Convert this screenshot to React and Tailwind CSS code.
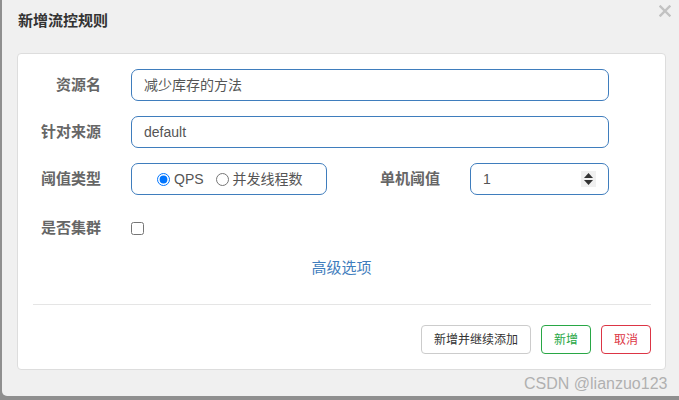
import React from "react";

const font = { fontFamily: '"Liberation Sans", "Noto Sans CJK SC", sans-serif' };

function Label({ children, w = "w-[83px]" }) {
  return (
    <div className={`${w} shrink-0 text-right text-[15px] font-bold text-[#666666] leading-[20px]`}>
      {children}
    </div>
  );
}

export default function App() {
  return (
    <div
      className="w-[679px] h-[400px] bg-[#8f8f8f] overflow-hidden flex pl-[2px] pb-[4px]"
      style={font}
    >
      <div className="relative flex-1 bg-[#f0f0f0] rounded-bl-[5px] flex flex-col">
        {/* close */}
        <div className="absolute left-[657px] top-[5px] w-[12px] h-[12px]">
          <svg width="12" height="12" viewBox="0 0 12 12">
            <path d="M1.5 1.5 L10.5 10.5 M10.5 1.5 L1.5 10.5" stroke="#c2c2c2" strokeWidth="2.4" strokeLinecap="square" />
          </svg>
        </div>
        {/* title */}
        <div className="h-[53px] pl-[16px] pt-[11px] text-[15px] font-bold text-[#333] leading-[20px]">
          新增流控规则
        </div>
        {/* card */}
        <div className="ml-[15px] w-[649px] h-[317px] bg-white border border-[#dddddd] rounded-[4px] flex flex-col pt-[15px]">
          {/* row1 */}
          <div className="flex items-center h-[32px]">
            <Label>资源名</Label>
            <div className="ml-[30px] w-[478px] h-[32px] border border-[#3f7dbd] rounded-[7px] flex items-center pl-[12px] text-[14px] text-[#555]">
              减少库存的方法
            </div>
          </div>
          {/* row2 */}
          <div className="flex items-center h-[32px] mt-[15px]">
            <Label>针对来源</Label>
            <div className="ml-[30px] w-[478px] h-[32px] border border-[#3f7dbd] rounded-[7px] flex items-center pl-[12px] text-[14px] text-[#555]">
              default
            </div>
          </div>
          {/* row3 */}
          <div className="flex items-center h-[32px] mt-[15px]">
            <Label>阈值类型</Label>
            <div className="ml-[30px] w-[196px] h-[32px] border border-[#3f7dbd] rounded-[7px] flex items-center pl-[25px] text-[14px] text-[#555]">
              <input type="radio" name="t" defaultChecked className="m-0 w-[13px] h-[13px]" />
              <span className="ml-[4px]">QPS</span>
              <input type="radio" name="t" className="m-0 ml-[12px] w-[13px] h-[13px]" />
              <span className="ml-[4px]">并发线程数</span>
            </div>
            <Label w="w-[113px]">单机阈值</Label>
            <div className="ml-[30px] w-[139px] h-[32px] border border-[#3f7dbd] rounded-[7px] flex items-center pl-[12px] pr-[12px] text-[14px] text-[#555]">
              <span className="flex-1">1</span>
              <div className="w-[15px] h-[16px] bg-[#f0f0f0] flex flex-col items-center justify-center gap-[2px]">
                <svg width="9" height="5" viewBox="0 0 9 5"><path d="M4.5 0 L9 5 L0 5 Z" fill="#333" /></svg>
                <svg width="9" height="5" viewBox="0 0 9 5"><path d="M0 0 L9 0 L4.5 5 Z" fill="#333" /></svg>
              </div>
            </div>
          </div>
          {/* row4 */}
          <div className="flex items-center h-[32px] mt-[17px]">
            <Label>是否集群</Label>
            <input type="checkbox" className="ml-[30px] m-0 w-[13px] h-[13px]" />
          </div>
          {/* advanced */}
          <div className="mt-[14px] text-center text-[15px] leading-[20px] text-[#3f7dbd]">
            高级选项
          </div>
          {/* hr */}
          <div className="mt-[26px] ml-[15px] mr-[14px] border-t border-[#e5e5e5]" />
          {/* buttons */}
          <div className="mt-[20px] mr-[14px] flex justify-end gap-[10px]">
            <div className="w-[110px] h-[29px] border border-[#cccccc] rounded-[4px] flex items-center justify-center text-[12px] text-[#333]">
              新增并继续添加
            </div>
            <div className="w-[50px] h-[29px] border border-[#28a745] rounded-[4px] flex items-center justify-center text-[12px] text-[#28a745]">
              新增
            </div>
            <div className="w-[50px] h-[29px] border border-[#dc3545] rounded-[4px] flex items-center justify-center text-[12px] text-[#dc3545]">
              取消
            </div>
          </div>
        </div>
        {/* watermark */}
        <div className="absolute left-[522px] top-[374px] text-[16px] leading-[20px] text-[#b0b0b0]">
          CSDN @lianzuo123
        </div>
      </div>
    </div>
  );
}
